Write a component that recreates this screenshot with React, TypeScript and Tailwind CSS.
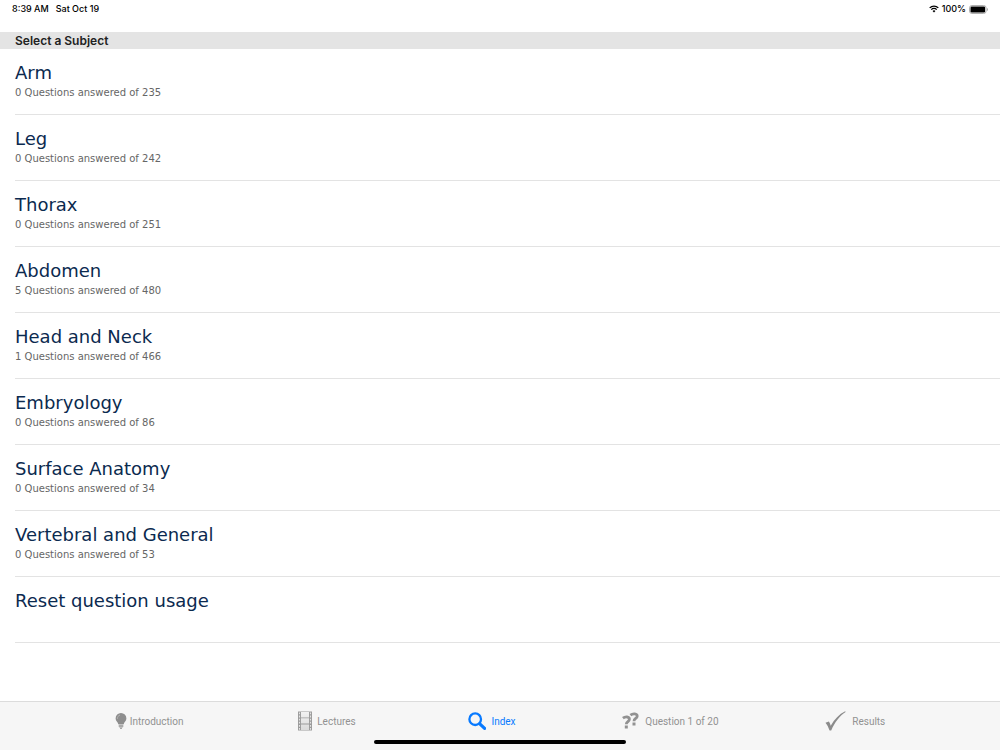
import React, { useState } from 'react';

const subjects = [
  { id: 1, name: 'Arm', detail: '0 Questions answered of 235' },
  { id: 2, name: 'Leg', detail: '0 Questions answered of 242' },
  { id: 3, name: 'Thorax', detail: '0 Questions answered of 251' },
  { id: 4, name: 'Abdomen', detail: '5 Questions answered of 480' },
  { id: 5, name: 'Head and Neck', detail: '1 Questions answered of 466' },
  { id: 6, name: 'Embryology', detail: '0 Questions answered of 86' },
  { id: 7, name: 'Surface Anatomy', detail: '0 Questions answered of 34' },
  { id: 8, name: 'Vertebral and General', detail: '0 Questions answered of 53' },
  { id: 9, name: 'Reset question usage', detail: '' }
];

function WifiIcon() {
  return (
    <svg width="10" height="8" viewBox="0 0 22 16" aria-hidden="true">
      <path d="M1.5 5.5a13.5 13.5 0 0 1 19 0" fill="none" stroke="#000" strokeWidth="3" />
      <path d="M5 9.3a8.5 8.5 0 0 1 12 0" fill="none" stroke="#000" strokeWidth="2.8" />
      <path d="M11 15.5l-3.2-3.3a4.6 4.6 0 0 1 6.4 0z" fill="#000" />
    </svg>
  );
}

function BatteryIcon() {
  return (
    <svg width="19" height="9" viewBox="0 0 19 9" aria-hidden="true">
      <rect x="0.5" y="0.5" width="16.6" height="8" rx="2.4" fill="none" stroke="#b0b0b0" />
      <rect x="1.5" y="1.5" width="14.6" height="6" rx="1.2" fill="#000" />
      <path d="M18 3c1.2.5 1.2 2.5 0 3z" fill="#a6a6a6" />
    </svg>
  );
}

function BulbIcon() {
  return (
    <svg width="12" height="18" viewBox="0 0 12 18" aria-hidden="true">
      <path d="M6 1a5.4 5.4 0 0 1 5.4 5.4c0 2.6-2.4 3.6-2.7 5.8H3.3C3 10 .6 9 .6 6.4A5.4 5.4 0 0 1 6 1z" fill="#8e8e8e" />
      <path d="M2.4 6.8c0-2 1-3.3 2.6-3.7" fill="none" stroke="#b4b4b4" strokeWidth="1" />
      <path d="M3.7 12.4h4.6v2.1l-1 1.3H4.7l-1-1.3z" fill="#ababab" />
      <path d="M5 16h2l-.5 1h-1z" fill="#8e8e8e" />
    </svg>
  );
}

function FilmIcon() {
  return (
    <svg width="14" height="20" viewBox="0 0 14 20" aria-hidden="true">
      <defs>
        <linearGradient id="frame" x1="0" y1="0" x2="0" y2="1">
          <stop offset="0" stopColor="#f2f2f2" />
          <stop offset="1" stopColor="#dadada" />
        </linearGradient>
      </defs>
      <rect x="0" y="0.5" width="14" height="19" fill="#9b9b9b" />
      <path d="M3 1h8v5.4H3zM3 7.3h8v5.3H3zM3 13.5h8V19H3z" fill="url(#frame)" />
      <path d="M1.5 1.5v17.5M12.5 1.5v17.5" stroke="#e4e4e4" strokeWidth="1.1" strokeDasharray="1.8 1.3" />
    </svg>
  );
}

function SearchIcon() {
  return (
    <svg width="18" height="18" viewBox="0 0 18 18" aria-hidden="true">
      <circle cx="7.2" cy="7.2" r="5.8" fill="none" stroke="#087aff" strokeWidth="2.3" />
      <path d="M11.8 11.8l4.8 4.6" stroke="#087aff" strokeWidth="3.2" strokeLinecap="round" />
    </svg>
  );
}

function QuestionsIcon() {
  return (
    <svg width="17" height="18" viewBox="0 0 17 18" aria-hidden="true">
      <g fill="none" stroke="#929292" strokeWidth="2.8">
        <path d="M.9 6.2C3.2 4.4 7.5 4.4 7.4 7.3c0 2.3-3.1 2.4-3.1 5" />
        <path d="M8.4 3.1C10.8 1.2 15.3 1.3 15.2 4.2c-.1 2.3-3.2 2.3-3.2 5" />
      </g>
      <path d="M2.8 13.6h3v3h-3zM10.5 10.4h3v3h-3z" fill="#929292" />
    </svg>
  );
}

function CheckIcon() {
  return (
    <svg width="21" height="20" viewBox="0 0 21 20" aria-hidden="true">
      <path d="M.5 11.7l3.4-1.2c.9 1.4 1.4 2.7 1.8 4.2C9.6 8.2 14 3.3 20.2.3l.4.6C14.7 4.7 10.1 10.7 6.2 19.4l-1.6.2C3.5 16.5 2.3 13.9.5 11.7z" fill="#8b8b8b" />
    </svg>
  );
}

const tabs = [
  { name: 'Introduction', Icon: BulbIcon, box: 'w-3', pad: 'pl-2 pr-1' },
  { name: 'Lectures', Icon: FilmIcon, box: 'w-4', pad: 'pl-1 pr-1.5' },
  { name: 'Index', Icon: SearchIcon, box: 'w-5', pad: '' },
  { name: 'Question 1 of 20', Icon: QuestionsIcon, box: 'w-5', pad: '' },
  { name: 'Results', Icon: CheckIcon, box: 'w-6', pad: 'pr-2' }
];

export default function App() {
  const [active, setActive] = useState('Index');

  return (
    <div className="flex min-h-screen flex-col bg-white font-['Inter',sans-serif]">
      <header className="flex h-8 items-start justify-between px-3 pt-1 text-[9px] leading-[10px] font-medium text-black">
        <div className="flex gap-[7px]">
          <span>8:39 AM</span>
          <span>Sat Oct 19</span>
        </div>
        <div className="flex items-center gap-[3px]">
          <WifiIcon />
          <span>100%</span>
          <BatteryIcon />
        </div>
      </header>

      <main className="flex-1">
        <h1 className="h-[17px] bg-[#e4e4e4] pl-[15px] text-[12px] leading-[18px] font-semibold text-[#222]">
          Select a Subject
        </h1>
        <ul className="pl-[15px] font-['DejaVu_Sans',sans-serif]">
          {subjects.map((subject) => (
            <li key={subject.id} className="border-b border-[#e3e3e3]">
              <button className="flex h-[65px] w-full flex-col items-start pt-[13px] text-left">
                <span className="text-[18px] leading-[22px] text-[#0b2a4f]">{subject.name}</span>
                <span className="text-[10px] leading-[18px] text-[#666]">{subject.detail}</span>
              </button>
            </li>
          ))}
        </ul>
      </main>

      <nav className="relative flex h-[49px] items-start justify-evenly border-t border-[#dcdcdc] bg-[#f6f6f6] pt-2 font-['Roboto',sans-serif]">
        {tabs.map(({ name, Icon, box, pad }) => (
          <button
            key={name}
            onClick={() => setActive(name)}
            className={`flex h-[22px] items-center gap-[3px] text-[10px] leading-[15px] ${pad} ${
              name === active ? 'text-[#087aff]' : 'text-[#929292]'
            }`}
          >
            <span className={`flex shrink-0 ${box}`}>
              <Icon />
            </span>
            {name}
          </button>
        ))}
        <div className="absolute bottom-1.5 left-1/2 h-1 w-[252px] -translate-x-1/2 rounded-full bg-black"></div>
      </nav>
    </div>
  );
}
